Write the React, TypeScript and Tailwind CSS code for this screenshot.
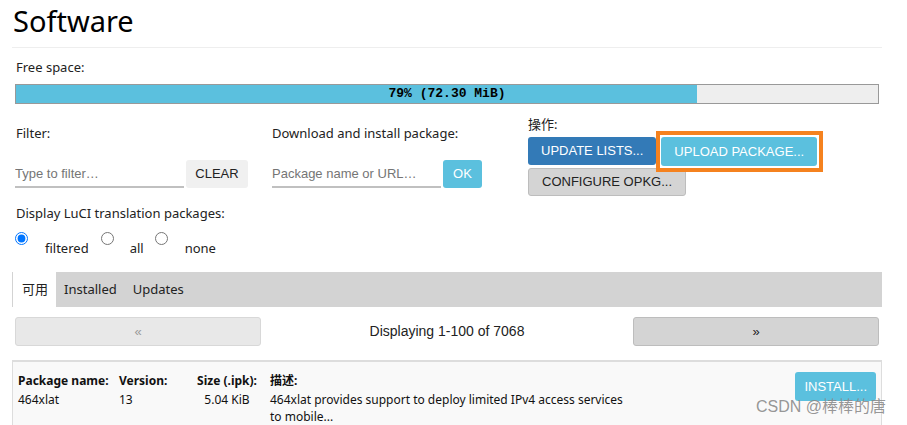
import React from 'react';

const ui = { fontFamily: '"Noto Sans", "Noto Sans CJK SC", sans-serif' };
const arial = { fontFamily: '"Liberation Sans", "Noto Sans CJK SC", sans-serif' };
const mono = { fontFamily: '"Liberation Mono", monospace' };

const PackageCell: React.FC<{ title: string; className?: string; children: React.ReactNode }> = ({ title, className, children }) => (
  <div className={className}>
    <div className="font-bold leading-[18px]">{title}</div>
    <div className="pt-[1px] leading-[17px]">{children}</div>
  </div>
);

export default function App() {
  return (
    <div className="relative min-h-screen bg-white text-[#222]" style={ui}>
      <div className="ml-[12px] w-[870px]">
        <h2 className="h-[48px] border-b border-[#eee] pl-[1px] pt-[1px] text-[29px] font-normal leading-[40px] text-black">
          Software
        </h2>

        <div className="px-[3px]">
          <div className="mt-[9px] pl-[1px] text-[13px] leading-[20px]">Free space:</div>
          <div className="relative mt-[7px] h-[20px] border border-[#999] bg-[#eee]">
            <div className="h-full w-[79%] bg-[#5bc0de]" />
            <div className="absolute inset-0 flex items-center justify-center text-[13px] font-bold text-black" style={mono}>
              79% (72.30 MiB)
            </div>
          </div>

          {/* filter / download / actions */}
          <div className="mt-[10px] grid grid-cols-[257px_256px_1fr] text-[13px]">
            <div className="pt-[9px]">
              <div className="pl-[1px] leading-[20px]">Filter:</div>
              <div className="mt-[17px] flex gap-[2px]">
                <input
                  className="h-[28px] w-[169px] border-b-2 border-[#c0c0c0] bg-transparent text-[13px] outline-none placeholder:text-[#757575]"
                  style={arial}
                  placeholder="Type to filter…"
                />
                <button className="h-[28px] w-[62px] rounded-[3px] bg-[#f0f0f0] text-[13px] text-[#222]" style={arial}>
                  CLEAR
                </button>
              </div>
            </div>
            <div className="pt-[9px]">
              <div className="leading-[20px]">Download and install package:</div>
              <div className="mt-[17px] flex gap-[2px]">
                <input
                  className="h-[28px] w-[169px] border-b-2 border-[#c0c0c0] bg-transparent text-[13px] outline-none placeholder:text-[#757575]"
                  style={arial}
                  placeholder="Package name or URL…"
                />
                <button className="h-[28px] w-[39px] rounded-[3px] bg-[#5bc0de] text-[13px] text-white" style={arial}>
                  OK
                </button>
              </div>
            </div>
            <div>
              <div className="leading-[20px]">操作:</div>
              <div className="mt-[3px] flex gap-[5px]" style={arial}>
                <button className="h-[28px] rounded-[3px] bg-[#337ab7] px-[13px] text-[13px] text-white">UPDATE LISTS...</button>
                <span className="relative">
                  <button className="h-[29px] rounded-[3px] bg-[#5bc0de] px-[13px] text-[13px] text-white">UPLOAD PACKAGE...</button>
                  <span className="pointer-events-none absolute -bottom-[6px] -left-[5px] -right-[6px] -top-[6px] border-4 border-[#f5821f]" />
                </span>
              </div>
              <div className="mt-[2px] flex" style={arial}>
                <button className="h-[28px] rounded-[3px] border border-[#bdbdbd] bg-[#d4d4d4] px-[13px] text-[13px] text-[#222]">
                  CONFIGURE OPKG...
                </button>
              </div>
            </div>
          </div>

          <div className="mt-[7px] pl-[1px] text-[13px] leading-[20px]">Display LuCI translation packages:</div>
          <div className="flex items-start text-[13px]">
            <input type="radio" name="lang" defaultChecked className="m-0 mt-[9px] h-[13px] w-[13px]" />
            <span className="ml-[17px] mt-[15px] leading-[20px]">filtered</span>
            <input type="radio" name="lang" className="m-0 ml-[12px] mt-[9px] h-[13px] w-[13px]" />
            <span className="ml-[16px] mt-[15px] leading-[20px]">all</span>
            <input type="radio" name="lang" className="m-0 ml-[11px] mt-[9px] h-[13px] w-[13px]" />
            <span className="ml-[17px] mt-[15px] leading-[20px]">none</span>
          </div>
        </div>

        {/* tabs */}
        <div className="mt-[14px] flex h-[35px] items-stretch bg-[#d3d3d3] text-[13px]">
          <div className="ml-[1px] flex items-center bg-white pl-[9px] pr-[8px]">可用</div>
          <div className="flex items-center px-[8px]">Installed</div>
          <div className="flex items-center px-[8px]">Updates</div>
        </div>

        {/* pager */}
        <div className="mt-[10px] grid grid-cols-[246px_1fr_246px] items-center px-[3px]" style={arial}>
          <button className="h-[29px] rounded-[3px] border border-[#d8d8d8] bg-[#e8e8e8] text-[13px] text-[#999]">«</button>
          <div className="text-center text-[14px] text-[#222]">Displaying 1-100 of 7068</div>
          <button className="h-[29px] rounded-[3px] border border-[#bdbdbd] bg-[#d4d4d4] text-[13px] text-[#222]">»</button>
        </div>

        {/* package table */}
        <div className="mt-[14px] flex h-[80px] border-x border-t-2 border-[#ddd] bg-[#f9f9f9] pl-[5px] pr-[5px] pt-[10px] text-[12px] text-[#111]">
          <PackageCell title="Package name:" className="w-[101px]">464xlat</PackageCell>
          <PackageCell title="Version:" className="w-[73px]">13</PackageCell>
          <PackageCell title="Size (.ipk):" className="w-[70px] text-center">5.04 KiB</PackageCell>
          <PackageCell title="描述:" className="ml-[8px] w-[356px]">
            464xlat provides support to deploy limited IPv4 access services to mobile...
          </PackageCell>
          <div className="flex flex-1 justify-end">
            <button className="h-[29px] rounded-[3px] bg-[#5bc0de] px-[9px] text-[13px] text-white" style={arial}>
              INSTALL...
            </button>
          </div>
        </div>
      </div>

      <div
        className="pointer-events-none absolute left-[756px] top-[396px] text-[16px] leading-[22px] text-[#8a8a8a]/90"
        style={arial}
      >
        CSDN @棒棒的唐
      </div>
    </div>
  );
}
